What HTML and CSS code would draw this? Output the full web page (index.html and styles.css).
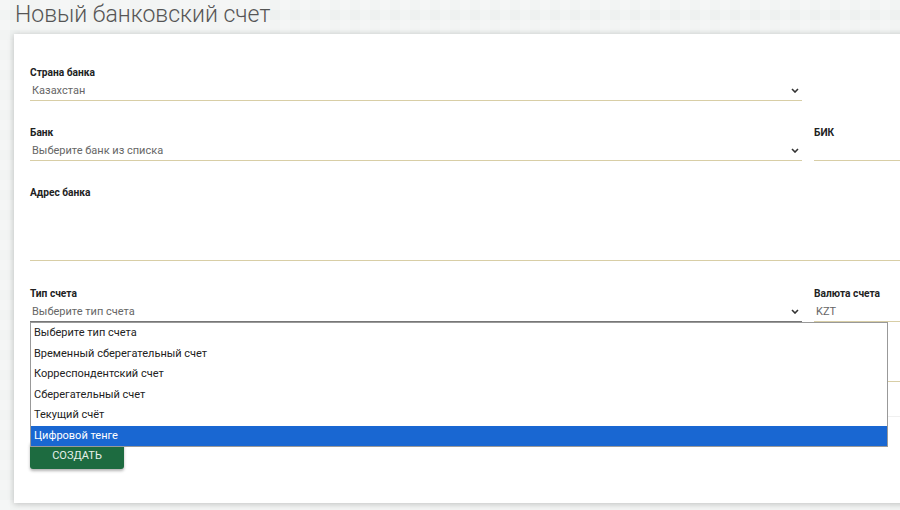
FILE: index.html
```html
<!DOCTYPE html>
<html lang="ru">
<head>
<meta charset="utf-8">
<title>Новый банковский счет</title>
<link rel="stylesheet" href="styles.css">
</head>
<body>
<h1 class="page-title">Новый банковский счет</h1>
<div class="card">
  <div class="form-grid">
    <div class="field">
      <label class="label">Страна банка</label>
      <div class="select">
        <span class="value">Казахстан</span>
        <svg class="chevron" width="8" height="5" viewBox="0 0 8 5"><path d="M1 1l3 3 3-3" fill="none" stroke="#333" stroke-width="1.6"/></svg>
      </div>
    </div>
    <div class="field empty"></div>

    <div class="field">
      <label class="label">Банк</label>
      <div class="select">
        <span class="value">Выберите банк из списка</span>
        <svg class="chevron" width="8" height="5" viewBox="0 0 8 5"><path d="M1 1l3 3 3-3" fill="none" stroke="#333" stroke-width="1.6"/></svg>
      </div>
    </div>
    <div class="field">
      <label class="label">БИК</label>
      <div class="input"></div>
    </div>

    <div class="field wide">
      <label class="label">Адрес банка</label>
      <div class="textarea"></div>
    </div>

    <div class="field">
      <label class="label">Тип счета</label>
      <div class="select focused">
        <span class="value">Выберите тип счета</span>
        <svg class="chevron" width="8" height="5" viewBox="0 0 8 5"><path d="M1 1l3 3 3-3" fill="none" stroke="#333" stroke-width="1.6"/></svg>
      </div>
      <ul class="dropdown">
        <li>Выберите тип счета</li>
        <li>Временный сберегательный счет</li>
        <li>Корреспондентский счет</li>
        <li>Сберегательный счет</li>
        <li>Текущий счёт</li>
        <li class="selected">Цифровой тенге</li>
      </ul>
    </div>
    <div class="field">
      <label class="label">Валюта счета</label>
      <div class="input"><span class="value">KZT</span></div>
    </div>

    <div class="field">
      <span class="label label-spacer"></span>
      <div class="input"></div>
    </div>
    <div class="field">
      <span class="label label-spacer"></span>
      <div class="input"></div>
    </div>
  </div>
  <hr class="divider">
  <button class="btn-create">Создать</button>
</div>
</body>
</html>
```
FILE: styles.css
```css
html, body {
  margin: 0;
  padding: 0;
  overflow: hidden;
}
body {
  background-color: #eef1f0;
  background-image:
    linear-gradient(90deg, rgba(255, 255, 255, 0.22) 50%, transparent 50%),
    linear-gradient(rgba(255, 255, 255, 0.22) 50%, transparent 50%);
  background-size: 20px 20px;
  font-family: Roboto, "Liberation Sans", Arial, sans-serif;
  width: 900px;
  height: 510px;
}
.page-title {
  margin: 0;
  padding: 1px 0 0 15px;
  font-size: 23px;
  line-height: 28px;
  font-weight: 300;
  color: #555;
  height: 34px;
  box-sizing: border-box;
}
.card {
  margin-left: 14px;
  width: 1000px;
  height: 469px;
  background: #fff;
  box-shadow: 0 1px 6px rgba(0, 0, 0, 0.22);
  box-sizing: border-box;
  padding: 32px 16px 0 16px;
}
.form-grid {
  display: grid;
  grid-template-columns: 772px 1fr;
  column-gap: 12px;
  row-gap: 25px;
}
.field {
  position: relative;
}
.field.wide {
  grid-column: 1 / span 2;
}
.label {
  display: block;
  font-size: 10.2px;
  line-height: 14px;
  font-weight: 700;
  color: #222;
}
.label-spacer {
  height: 14px;
}
.select, .input {
  height: 21px;
  box-sizing: border-box;
  border-bottom: 1px solid #d8cea6;
  display: flex;
  align-items: center;
  justify-content: space-between;
  padding: 0 2px;
}
.select.focused {
  border-bottom-color: #777;
}
.value {
  font-size: 11px;
  font-weight: 400;
  color: #666;
}
.chevron {
  margin-right: 1px;
  margin-top: 1px;
}
.textarea {
  height: 61px;
  box-sizing: border-box;
  border-bottom: 1px solid #d8cea6;
}
.field.wide + .field,
.field.wide + .field + .field {
  margin-top: 1px;
}
.dropdown {
  position: absolute;
  left: 0;
  top: 35px;
  width: 858px;
  margin: 0;
  padding: 0;
  list-style: none;
  background: #fff;
  border: 1px solid #999;
  box-sizing: border-box;
  z-index: 10;
}
.dropdown li {
  font-size: 11px;
  line-height: 20.5px;
  height: 20.5px;
  padding-left: 3px;
  color: #222;
}
.dropdown li.selected {
  background: #1967d2;
  color: #fff;
}
.divider {
  border: 0;
  border-top: 1px solid #f0f0f0;
  margin: 34px 0 0 0;
}
.btn-create {
  margin-top: 24px;
  display: block;
  width: 94px;
  height: 28px;
  border: 0;
  border-radius: 3px;
  background: #1d6b40;
  color: #e8f0ea;
  font-family: Roboto, "Liberation Sans", Arial, sans-serif;
  font-size: 11px;
  text-transform: uppercase;
  box-shadow: 0 2px 3px rgba(0, 0, 0, 0.3);
  padding: 0;
}
```
